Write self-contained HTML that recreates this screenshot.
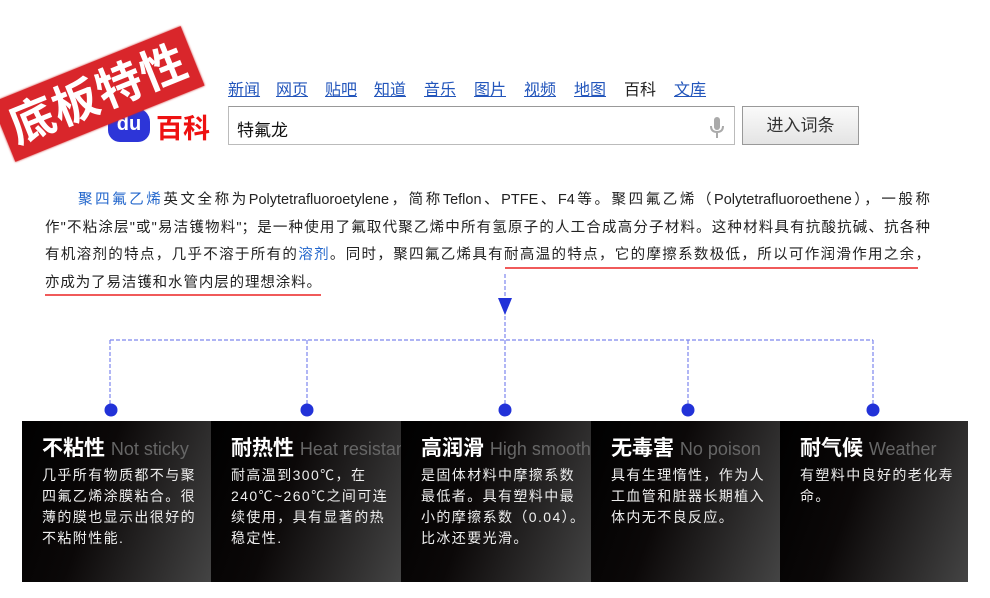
<!DOCTYPE html>
<html><head><meta charset="utf-8"><style>
*{margin:0;padding:0;box-sizing:border-box}
body{width:990px;height:598px;background:#fff;position:relative;overflow:hidden;font-family:"Liberation Sans","Noto Sans CJK SC",sans-serif}
.nav{position:absolute;top:76px;left:228px;font-size:16px;color:#2255bb}
.nav span{position:absolute;white-space:nowrap;text-decoration:underline}
.nav span.cur{color:#222;text-decoration:none}
.logo{position:absolute;left:120px;top:107px;font-size:27px;font-weight:bold;color:#e11}
.du{position:absolute;left:108px;top:108px;width:42px;height:34px;background:#2d35d8;border-radius:14px 14px 12px 12px;color:#fff;font-size:20px;font-weight:bold;text-align:center;line-height:32px}
.search{position:absolute;left:228px;top:106px;width:507px;height:39px;border:1px solid #bbb;border-top-color:#999;font-size:17px;padding:9px 8px;color:#111}
.btn{position:absolute;left:742px;top:106px;width:117px;height:39px;border:1px solid #999;background:linear-gradient(#fafafa,#e4e4e4);font-size:17px;text-align:center;line-height:37px;color:#333}
.stamp{position:absolute;left:-4px;top:62px;width:204px;height:64px;background:#d9262b;transform:rotate(-22deg);transform-origin:center;color:#fff;font-size:46px;font-weight:bold;text-align:center;line-height:64px;letter-spacing:1px;box-shadow:0 0 2px #c22}
.p{position:absolute;left:45px;width:885px;font-size:14.5px;color:#222;text-align:justify;text-align-last:justify;white-space:nowrap;height:20px;line-height:20px}
.lk{color:#2266cc}
.ul{position:absolute;height:2px;background:#f05a5a}
.panel{position:absolute;top:421px;height:161px;background:linear-gradient(110deg,#000 0%,#0b0808 40%,#444 100%);color:#fff;padding:14px 0 0 20px;overflow:hidden}
.panel h3{font-size:21px;font-weight:bold;white-space:nowrap;line-height:28px}
.panel h3 small{font-size:18px;font-weight:normal;color:#666}
.panel p{font-size:14px;line-height:21px;margin-top:2px;color:#eee;width:166px;letter-spacing:1.4px}
</style></head><body>
<div class="nav">
<span style="left:0">新闻</span><span style="left:48px">网页</span><span style="left:97px">贴吧</span><span style="left:146px">知道</span><span style="left:196px">音乐</span><span style="left:246px">图片</span><span style="left:296px">视频</span><span style="left:346px">地图</span><span class="cur" style="left:396px">百科</span><span style="left:446px">文库</span>
</div>
<div class="du">du</div>
<div class="logo" style="left:156px">百科</div>
<div class="search">特氟龙<svg style="position:absolute;right:10px;top:10px" width="14" height="22" viewBox="0 0 14 22"><rect x="4" y="0" width="6" height="13" rx="3" fill="#aaa"/><path d="M1 9q0 6 6 6q6 0 6-6M7 15v6" stroke="#aaa" stroke-width="2" fill="none"/></svg></div>
<div class="btn">进入词条</div>
<div class="stamp">底板特性</div>

<div class="p" style="top:190px;left:78px;width:852px"><span class="lk">聚四氟乙烯</span>英文全称为Polytetrafluoroetylene，简称Teflon、PTFE、F4等。聚四氟乙烯（Polytetrafluoroethene），一般称</div>
<div class="p" style="top:218px">作"不粘涂层"或"易洁镬物料"；是一种使用了氟取代聚乙烯中所有氢原子的人工合成高分子材料。这种材料具有抗酸抗碱、抗各种</div>
<div class="p" style="top:245px">有机溶剂的特点，几乎不溶于所有的<span class="lk">溶剂</span>。同时，聚四氟乙烯具有耐高温的特点，它的摩擦系数极低，所以可作润滑作用之余，</div>
<div class="p" style="top:273px;width:276px">亦成为了易洁镬和水管内层的理想涂料。</div>
<div class="ul" style="left:505px;top:267px;width:413px"></div>
<div class="ul" style="left:45px;top:294px;width:276px"></div>

<svg style="position:absolute;left:0;top:0" width="990" height="420">
<g stroke="#7d86ee" stroke-width="1.2" stroke-dasharray="4,2" fill="none">
<path d="M505 274V410M110 340H873M110 340V410M307 340V410M688 340V410M873 340V410"/>
</g>
<path d="M498 298L512 298L505 315Z" fill="#2232d8"/>
<g fill="#2232d8"><circle cx="111" cy="410" r="6.5"/><circle cx="307" cy="410" r="6.5"/><circle cx="505" cy="410" r="6.5"/><circle cx="688" cy="410" r="6.5"/><circle cx="873" cy="410" r="6.5"/></g>
</svg>

<div class="panel" style="left:22px;width:189px"><h3>不粘性 <small>Not sticky</small></h3><p>几乎所有物质都不与聚四氟乙烯涂膜粘合。很薄的膜也显示出很好的不粘附性能.</p></div>
<div class="panel" style="left:211px;width:190px"><h3>耐热性 <small>Heat resistance</small></h3><p>耐高温到300℃，在240℃~260℃之间可连续使用，具有显著的热稳定性.</p></div>
<div class="panel" style="left:401px;width:190px"><h3>高润滑 <small>High smooth</small></h3><p>是固体材料中摩擦系数最低者。具有塑料中最小的摩擦系数（0.04）。比冰还要光滑。</p></div>
<div class="panel" style="left:591px;width:189px"><h3>无毒害 <small>No poison</small></h3><p>具有生理惰性，作为人工血管和脏器长期植入体内无不良反应。</p></div>
<div class="panel" style="left:780px;width:188px"><h3>耐气候 <small>Weather</small></h3><p>有塑料中良好的老化寿命。</p></div>
</body></html>
